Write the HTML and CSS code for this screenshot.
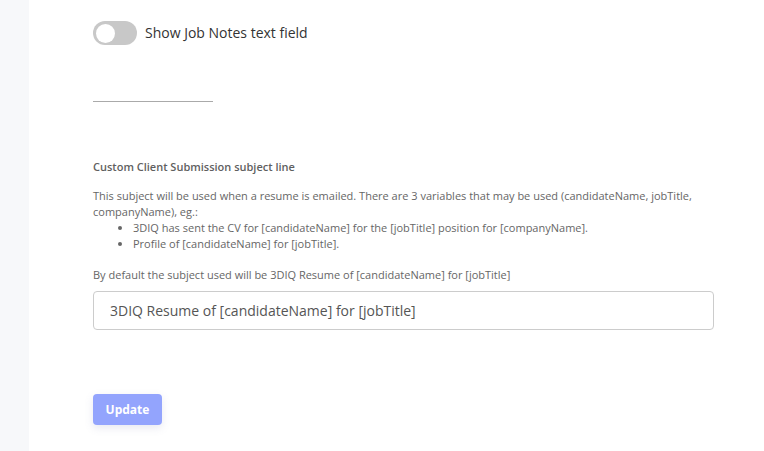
FILE: index.html
```html
<!DOCTYPE html>
<html>
<head>
<meta charset="utf-8">
<link rel="stylesheet" href="styles.css">
</head>
<body>
<div class="layout">
  <aside class="sidebar"></aside>
  <main class="content">
    <label class="toggle-row">
      <span class="toggle"><span class="knob"></span></span>
      <span class="toggle-label">Show Job Notes text field</span>
    </label>
    <hr class="divider">
    <h4 class="section-title">Custom Client Submission subject line</h4>
    <div class="help">
      <p class="help-p">This subject will be used when a resume is emailed. There are 3 variables that may be used (candidateName, jobTitle, companyName), eg.:</p>
      <ul class="help-list">
        <li>3DIQ has sent the CV for [candidateName] for the [jobTitle] position for [companyName].</li>
        <li>Profile of [candidateName] for [jobTitle].</li>
      </ul>
      <p class="help-default">By default the subject used will be 3DIQ Resume of [candidateName] for [jobTitle]</p>
    </div>
    <input class="subject-input" type="text" placeholder="3DIQ Resume of [candidateName] for [jobTitle]">
    <button class="update-btn">Update</button>
  </main>
</div>
</body>
</html>
```
FILE: styles.css
```css
* { box-sizing: border-box; }
html, body { margin: 0; padding: 0; background: #fff; }
body { font-family: "Open Sans", "Liberation Sans", sans-serif; color: #555; }
.layout { display: flex; min-height: 451px; }
.sidebar { width: 29px; flex: none; background: #f7f8fa; }
.content { flex: 1; padding: 21px 0 0 64px; display: flex; flex-direction: column; align-items: flex-start; }
.toggle-row { display: flex; align-items: center; gap: 8px; }
.toggle { width: 44px; height: 24px; border-radius: 12px; background: #c8c8c8; display: flex; align-items: center; padding: 0 3px; }
.knob { width: 19px; height: 19px; border-radius: 50%; background: #fff; }
.toggle-label { font-size: 14px; color: #333; line-height: 24px; }
.divider { width: 120px; margin: 56px 0 0 0; border: 0; border-top: 1px solid #aaa; height: 0; }
.section-title { margin: 57px 0 0 0; font-size: 11px; font-weight: 600; color: #5f5f5f; line-height: 16px; }
.help { font-size: 11px; line-height: 16px; color: #666; margin-top: 13px; width: 640px; }
.help-p { margin: 0; }
.help-list { margin: 0; padding-left: 40px; }
.help-default { margin: 15px 0 0 0; }
.subject-input { margin-top: 8px; width: 621px; height: 39px; border: 1px solid #ccc; border-radius: 4px; padding: 0 16px; font-family: "Open Sans", "Liberation Sans", sans-serif; font-size: 14px; color: #555; outline: none; }
.subject-input::placeholder { color: #555; }
.update-btn { margin-top: 64px; width: 69px; height: 31px; border: 0; border-radius: 4px; background: #93a4fd; color: #fff; font-family: "Open Sans", "Liberation Sans", sans-serif; font-weight: 700; font-size: 12px; box-shadow: 0 3px 8px rgba(100, 110, 160, 0.15); padding: 0; }
```
